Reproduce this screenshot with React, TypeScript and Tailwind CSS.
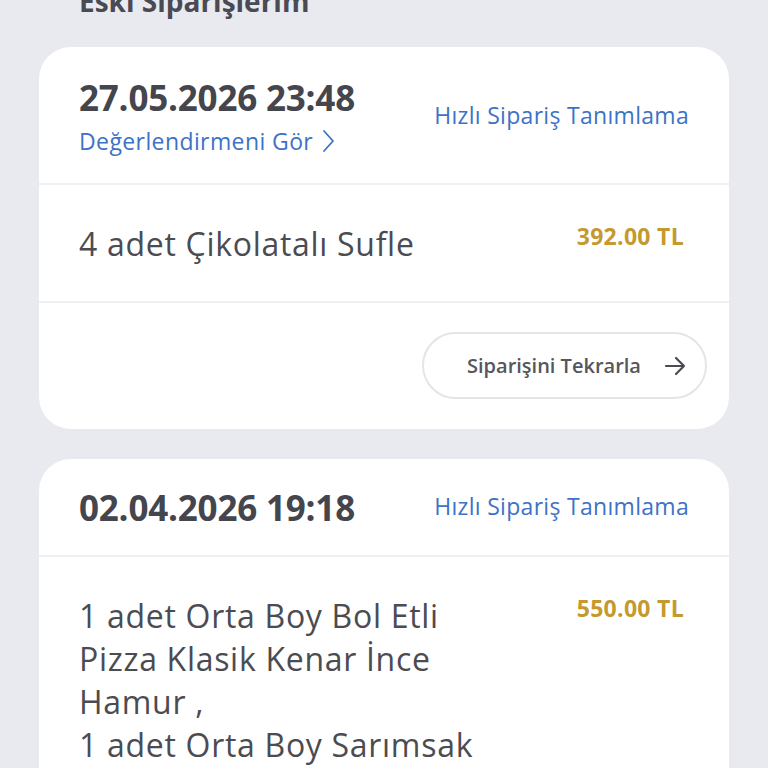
import React from 'react'

type Order = {
  date: string
  showReview?: boolean
  items: string[]
  price: string
}

const orders: Order[] = [
  { date: '27.05.2026 23:48', showReview: true, items: ['4 adet Çikolatalı Sufle'], price: '392.00 TL' },
  {
    date: '02.04.2026 19:18',
    items: ['1 adet Orta Boy Bol Etli Pizza Klasik Kenar İnce Hamur ,', '1 adet Orta Boy Sarımsak Soslu Patates'],
    price: '550.00 TL',
  },
]

function ChevronRight() {
  return (
    <svg width="14" height="24" viewBox="0 0 14 24" fill="none" stroke="currentColor" strokeWidth="1.8" strokeLinecap="round" strokeLinejoin="round">
      <path d="M3 2l9 10-9 10" />
    </svg>
  )
}

function ArrowRight() {
  return (
    <svg width="24" height="24" viewBox="0 0 24 24" fill="none" stroke="currentColor" strokeWidth="2.2" strokeLinecap="round" strokeLinejoin="round">
      <path d="M3 12h18M13 4l8 8-8 8" />
    </svg>
  )
}

function OrderCard({ order }: { order: Order }) {
  return (
    <div className="bg-white rounded-[32px] overflow-hidden">
      {/* header */}
      <div className={`flex justify-between items-center px-[40px] border-b-2 border-[#eef0f3] ${order.showReview ? 'pt-[31px] pb-[27px]' : 'pt-[29px] pb-[27px]'}`}>
        <div>
          <div className="text-[35px] leading-[40px] font-bold text-[#45454d] tracking-[-0.2px]">{order.date}</div>
          {order.showReview && (
            <div className="flex items-center gap-[8px] text-[23px] leading-[30px] text-[#3d72c7] mt-[8px] tracking-[0.4px]">
              <span>Değerlendirmeni Gör</span>
              <ChevronRight />
            </div>
          )}
        </div>
        <div className="text-[23px] leading-[30px] text-[#3d72c7] tracking-[0.3px] mt-[-4px]">Hızlı Sipariş Tanımlama</div>
      </div>

      {/* items */}
      <div className="flex justify-between pl-[40px] pr-[45px] pt-[37px] pb-[36px] border-b-2 border-[#eef0f3]">
        <div className="text-[32px] leading-[43px] text-[#4b4b52] w-[410px] tracking-[0.7px]">
          {order.items.map((it) => (
            <div key={it}>{it}</div>
          ))}
        </div>
        <div className="text-[23px] leading-[28px] font-bold text-[#c49a2f] tracking-[0.3px]">{order.price}</div>
      </div>

      {/* repeat */}
      <div className="flex justify-end pr-[22px] pt-[29px] pb-[30px]">
        <button className="flex items-center justify-between w-[285px] h-[67px] rounded-full border-2 border-[#e4e5e8] pl-[43px] pr-[18px] text-[20px] font-semibold text-[#56565d]">
          <span>Siparişini Tekrarla</span>
          <span className="text-[#4a4a52]">
            <ArrowRight />
          </span>
        </button>
      </div>
    </div>
  )
}

export default function App() {
  return (
    <div className="min-h-[768px] h-[768px] overflow-hidden bg-[#e9eaef]" style={{ fontFamily: '"Open Sans", "Noto Sans", sans-serif' }}>
      <div className="px-[39px] mt-[-19px]">
        <div className="pl-[40px] text-[28px] leading-[40px] font-bold text-[#4a4a55]">Eski Siparişlerim</div>
        <div className="mt-[26px] flex flex-col gap-[30px]">
          {orders.map((o) => (
            <OrderCard key={o.date} order={o} />
          ))}
        </div>
      </div>
    </div>
  )
}
